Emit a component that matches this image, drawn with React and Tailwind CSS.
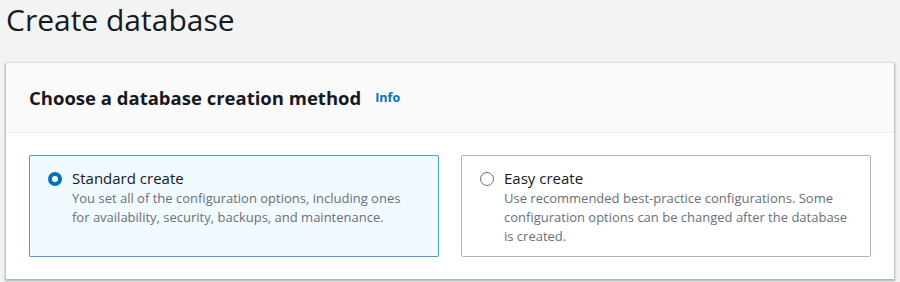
export default function App() {
    return (
        <div className="w-[900px] h-[282px] overflow-hidden bg-[#f2f3f3] text-[#16191f]" style={{ fontFamily: '"Open Sans", "Noto Sans", Arial, sans-serif' }}>
            <h1 className="pl-[6px] pt-[1px] text-[30px] leading-[38px] font-normal">Create database</h1>

            <div className="mx-[6px] mt-[24px] bg-white shadow-[0_1px_2px_1px_rgba(0,28,36,0.3)]">
                {/* Header */}
                <div className="h-[70px] px-[23px] flex items-center gap-[14px] bg-[#fafafa] border-b border-[#eaeded]">
                    <h2 className="text-[18.5px] font-bold leading-[22px]">Choose a database creation method</h2>
                    <a className="text-[12.5px] font-bold text-[#0073bb] mt-[2px]">Info</a>
                </div>

                {/* Options */}
                <div className="px-[23px] pt-[22px] pb-[22px] grid grid-cols-2 gap-[22px]">
                    <div className="h-[102px] border border-[#0073bb]/70 bg-[#f1faff] rounded-[2px] px-[18px] pt-[12px] flex gap-[10px]">
                        <span className="mt-[4px] w-[14px] h-[14px] rounded-full border-[4px] border-[#0073bb] bg-white shrink-0"></span>
                        <div>
                            <div className="text-[15px] leading-[20px]">Standard create</div>
                            <p className="text-[13px] leading-[19px] text-[#687078] mt-[1px]">You set all of the configuration options, including ones for availability, security, backups, and maintenance.</p>
                        </div>
                    </div>
                    <div className="h-[102px] border border-[#aab7b8] bg-white rounded-[2px] px-[18px] pt-[12px] flex gap-[10px]">
                        <span className="mt-[4px] w-[14px] h-[14px] rounded-full border border-[#687078] bg-white shrink-0"></span>
                        <div>
                            <div className="text-[15px] leading-[20px]">Easy create</div>
                            <p className="text-[13px] leading-[19px] text-[#687078] mt-[1px]">Use recommended best-practice configurations. Some configuration options can be changed after the database is created.</p>
                        </div>
                    </div>
                </div>
            </div>
        </div>
    );
}
